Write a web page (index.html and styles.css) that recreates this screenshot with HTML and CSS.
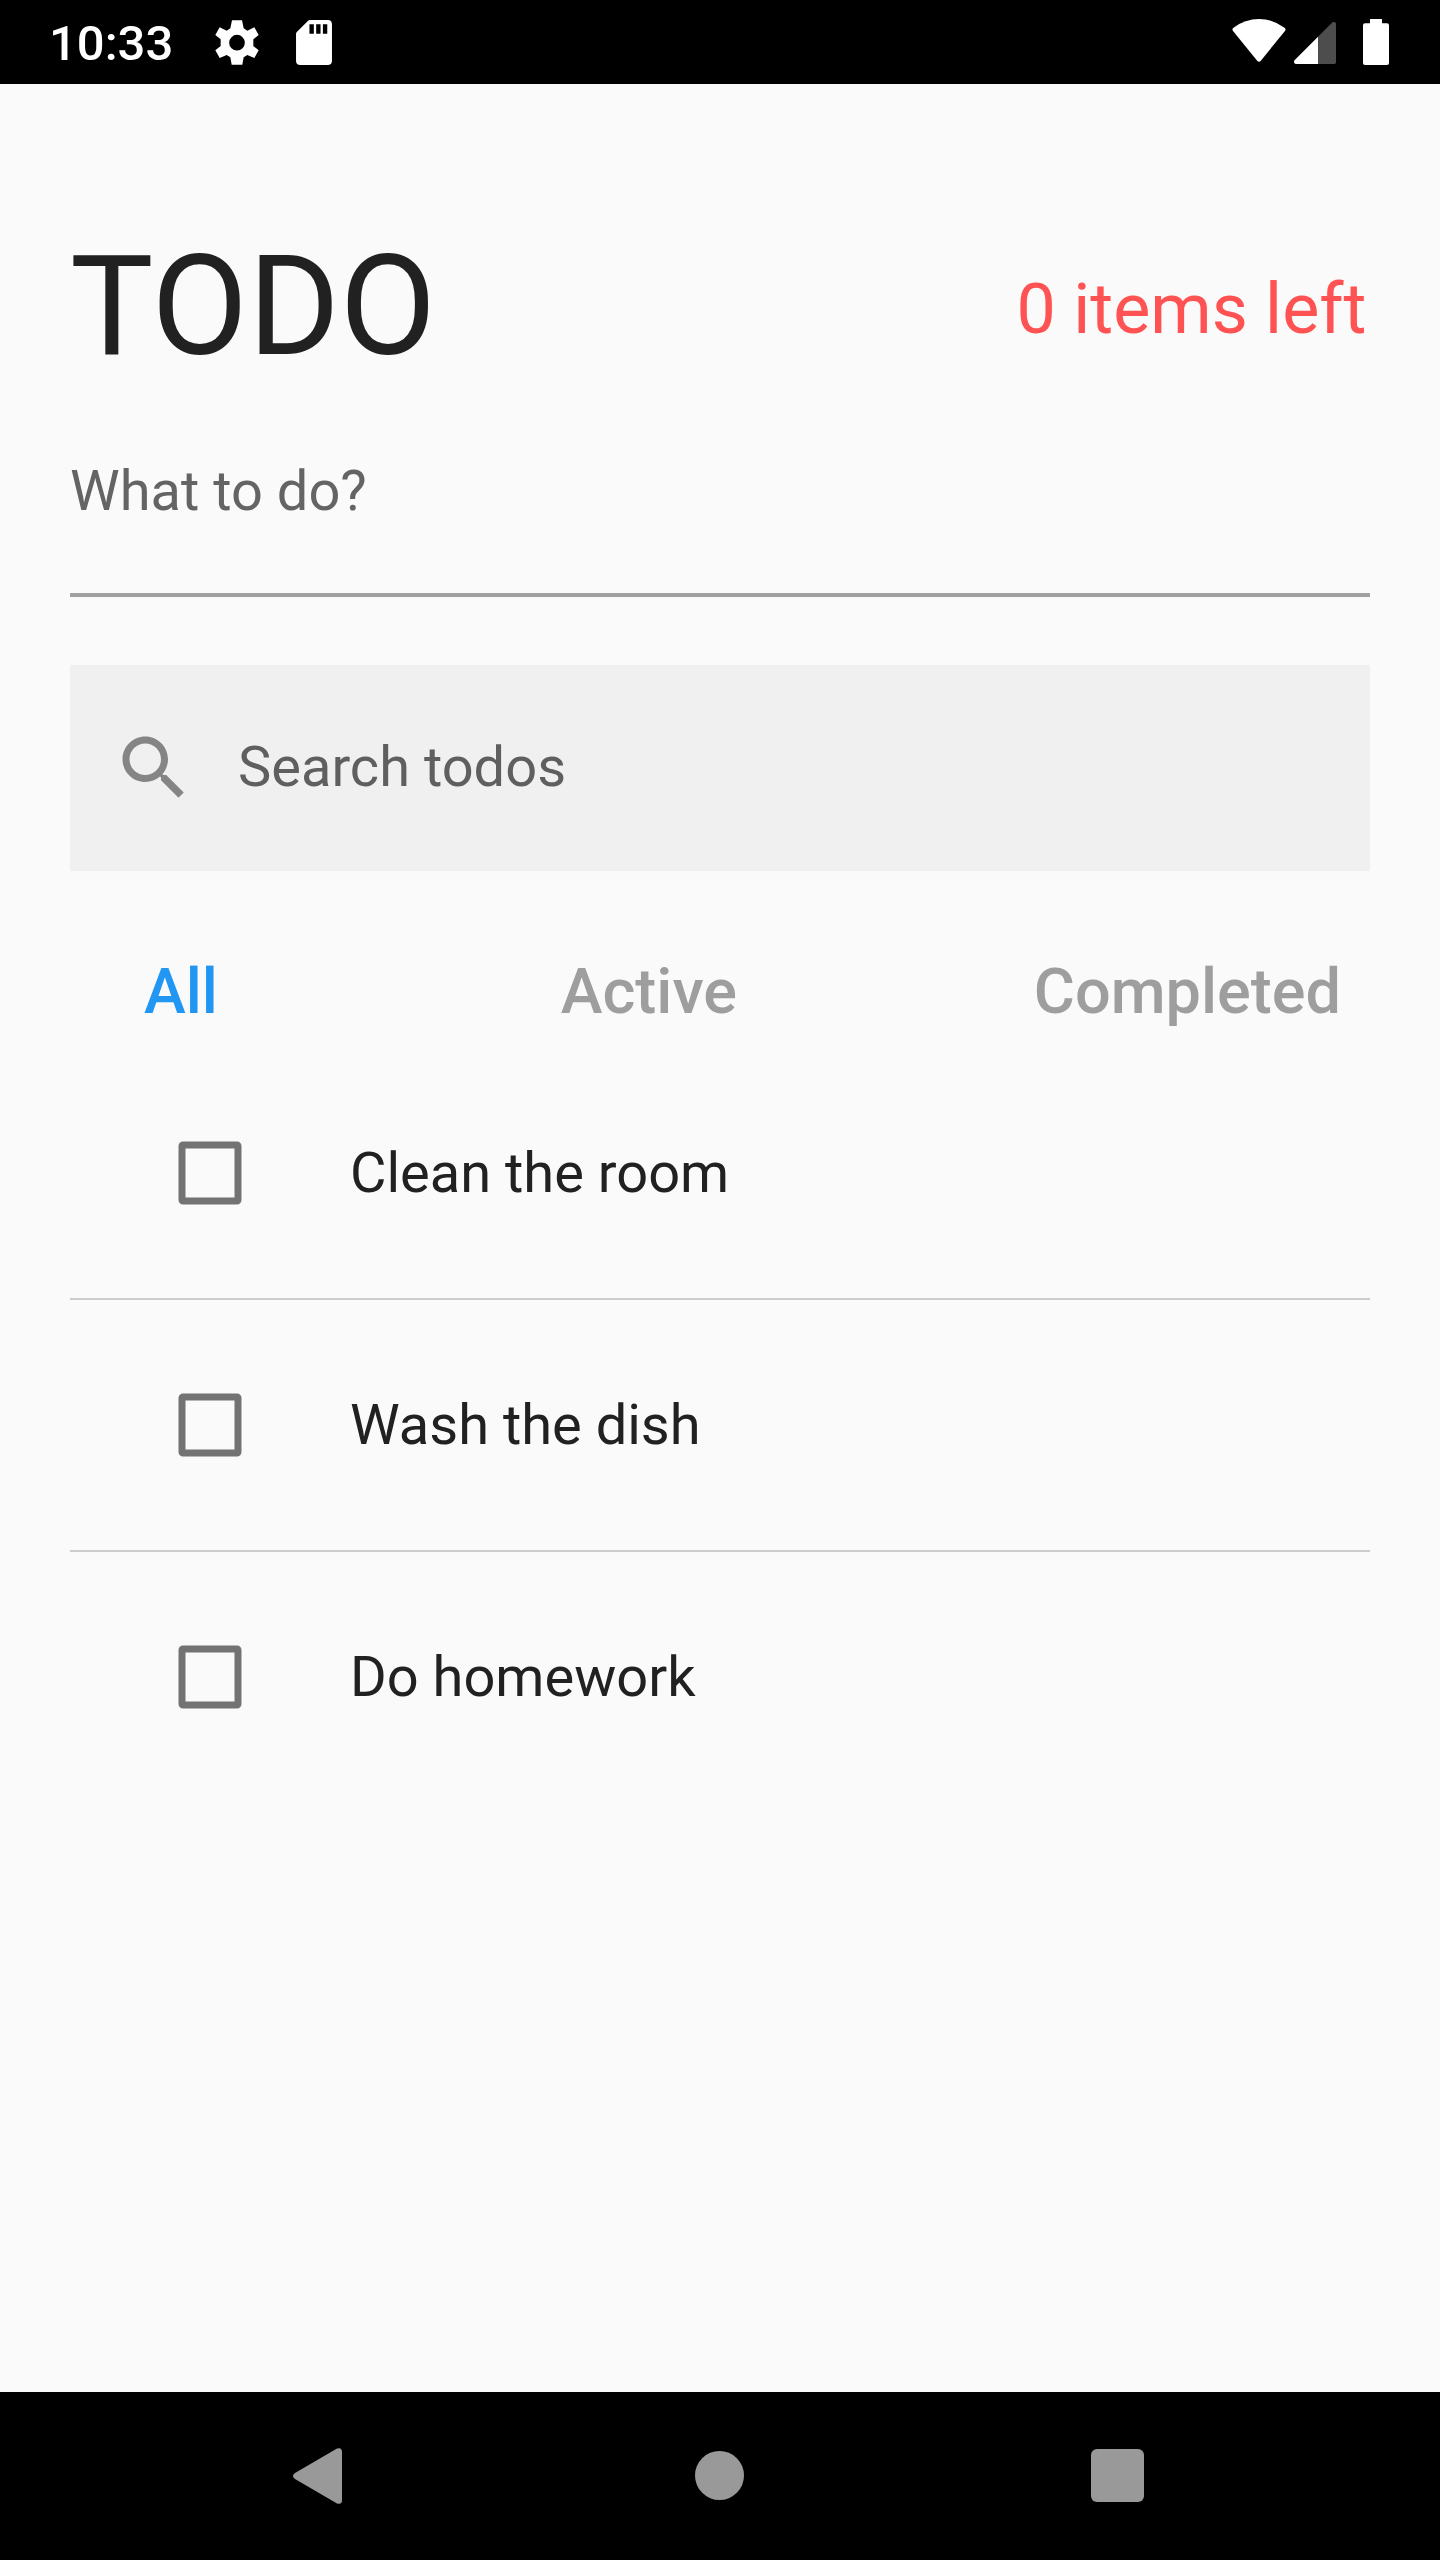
FILE: index.html
```html
<!DOCTYPE html>
<html lang="en">
<head>
  <meta charset="UTF-8" />
  <meta name="viewport" content="width=device-width, initial-scale=1.0" />
  <title>TODO</title>
  <link rel="stylesheet" href="styles.css">
</head>
<body>

  <!-- Status bar -->
  <header class="status-bar">
    <span class="time">10:33</span>
    <svg class="icon-settings" viewBox="646 59 132 135">
      <path fill-rule="evenodd" d="M697 60H727L732 84L743 91L764 81L777 104L761 117V137L777 150L764 173L743 164L732 171L728 193H696L692 171L681 164L660 173L647 150L663 137V117L647 104L660 81L681 91L692 84ZM712 103.500a23.500 23.500 0 1 0 0 47a23.500 23.500 0 1 0 0 -47Z" />
    </svg>
    <svg class="icon-sd" viewBox="890 60 107 134">
      <path fill-rule="evenodd" d="M932 60H984Q997 60 997 73V181Q997 194 984 194H903Q890 194 890 181V101Q890 98 893 95L926 62Q928 60 932 60ZM930 73V101H943V73ZM950 73V101H963V73ZM970 73V101H983V73Z" />
    </svg>
    <div class="status-right">
      <svg class="icon-wifi" viewBox="95 58 161 129">
        <path d="M97 93Q94 88 99 84Q134 58 175.500 58Q217 58 252 84Q257 88 254 93L181 183Q175.500 189 170 183Z" />
      </svg>
      <svg class="icon-signal" viewBox="282 66 126 126">
        <path class="dim" d="M354 110L396 68Q400 65 404 66Q408 68 408 72V187Q408 192 403 192H354Z" />
        <path d="M354 110V192H288Q283 192 282 187Q281 183 285 179Z" />
      </svg>
      <svg class="icon-battery" viewBox="489 57 78 138">
        <path d="M510 57H546V70H561Q567 70 567 76V189Q567 195 561 195H495Q489 195 489 189V76Q489 70 495 70H510Z" />
      </svg>
    </div>
  </header>

  <main>
    <div class="title-row">
      <h1>TODO</h1>
      <span class="items-left">0 items left</span>
    </div>

    <div class="new-todo">What to do?</div>

    <div class="search">
      <svg class="icon-search" viewBox="0 0 24 24">
        <path d="M15.500 14h-.79l-.28-.27C15.410 12.590 16 11.110 16 9.500 16 5.910 13.090 3 9.500 3S3 5.910 3 9.500 5.910 16 9.500 16c1.610 0 3.090-.59 4.230-1.570l.27.28v.79l5 4.990L20.490 19l-4.990-5zm-6 0C7.010 14 5 11.990 5 9.500S7.010 5 9.500 5 14 7.010 14 9.500 11.990 14 9.500 14z" />
      </svg>
      <span>Search todos</span>
    </div>

    <nav class="filters">
      <a class="active">All</a>
      <a class="middle">Active</a>
      <a>Completed</a>
    </nav>

    <ul class="todos">
      <li>
        <svg class="checkbox" viewBox="0 0 64 64"><rect x="4" y="4" width="56" height="56" rx="1" /></svg>
        Clean the room
      </li>
      <li>
        <svg class="checkbox" viewBox="0 0 64 64"><rect x="4" y="4" width="56" height="56" rx="1" /></svg>
        Wash the dish
      </li>
      <li>
        <svg class="checkbox" viewBox="0 0 64 64"><rect x="4" y="4" width="56" height="56" rx="1" /></svg>
        Do homework
      </li>
    </ul>
  </main>

  <!-- Navigation bar -->
  <footer class="nav-bar">
    <svg class="back" viewBox="0 0 49 56">
      <path d="M44 .5Q49-1 49 4V52Q49 57 44 55.500L2 31Q-2 28 2 25Z" />
    </svg>
    <span class="home"></span>
    <span class="recent"></span>
  </footer>

</body>
</html>
```

FILE: styles.css
```css
:root {
  --bg-color: #fafafa;
  --text-color: #212121;
  --hint-color: #646464;
  --accent-color: #2196f3;
  --nav-color: #999999;
}
* {
  box-sizing: border-box;
}
body {
  margin: 0;
  height: 2560px;
  display: flex;
  flex-direction: column;
  font-family: Roboto, sans-serif;
  font-size: 56px;
  background-color: var(--bg-color);
  color: var(--text-color);
}
svg {
  display: block;
  flex: none;
}
.status-bar {
  height: 84px;
  padding: 0 51px 0 49px;
  display: flex;
  align-items: center;
  background-color: #000;
  color: #fff;
  fill: #fff;
}
.time {
  width: 166px;
  padding-top: 4px;
  font-size: 49px;
  line-height: 84px;
  font-weight: 500;
}
.icon-settings {
  width: 44px;
  height: 45px;
}
.icon-sd {
  width: 36px;
  height: 45px;
  margin-left: 37px;
}
.status-right {
  display: flex;
  margin-left: auto;
}
.icon-wifi {
  width: 54px;
  height: 43px;
}
.icon-signal {
  width: 42px;
  height: 42px;
  margin: 3px 27px 0 8px;
}
.icon-signal .dim {
  fill: #4d4d4d;
}
.icon-battery {
  width: 26px;
  height: 46px;
}
main {
  flex: 1;
  padding: 140px 70px 0;
}
.title-row {
  display: flex;
  justify-content: space-between;
  height: 164px;
  line-height: 164px;
}
h1 {
  margin: 0;
  font-size: 140px;
  font-weight: 400;
}
.items-left {
  padding: 3px 3.5px 0 0;
  font-size: 70px;
  color: #ff5252;
}
.new-todo {
  height: 209px;
  padding-top: 70px;
  line-height: 66px;
  color: var(--hint-color);
  border-bottom: 4px solid #a0a0a0;
}
.search {
  height: 206px;
  margin-top: 68px;
  padding-left: 42px;
  display: flex;
  align-items: center;
  gap: 42px;
  background-color: #f0f0f0;
  color: #5f5f5f;
}
.search span {
  padding-bottom: 2px;
}
.icon-search {
  width: 84px;
  height: 84px;
  fill: #858585;
}
.filters {
  height: 177px;
  padding: 0 29px 0 74px;
  display: flex;
  justify-content: space-between;
  line-height: 241px;
  font-size: 63px;
  font-weight: 500;
  color: #9e9e9e;
}
.filters .active {
  color: var(--accent-color);
}
.filters .middle {
  padding-left: 46px;
}
.todos {
  margin: 0;
  padding: 0;
  list-style: none;
}
.todos li {
  height: 252px;
  padding-left: 108px;
  display: flex;
  align-items: center;
  gap: 108px;
  border-bottom: 2px solid #ccc;
}
.todos li:last-child {
  border-color: transparent;
}
.checkbox {
  width: 64px;
  height: 64px;
  fill: none;
  stroke: #737373;
  stroke-width: 7px;
}
.nav-bar {
  height: 168px;
  padding: 0 296px 0 293px;
  display: flex;
  align-items: center;
  justify-content: space-between;
  background-color: #000;
}
.back {
  width: 49px;
  height: 56px;
  fill: var(--nav-color);
}
.home {
  width: 49px;
  height: 49px;
  margin: 0 0 1px 5px;
  border-radius: 50%;
  background-color: var(--nav-color);
}
.recent {
  width: 53px;
  height: 53px;
  margin-bottom: 1px;
  border-radius: 6px;
  background-color: var(--nav-color);
}
```
